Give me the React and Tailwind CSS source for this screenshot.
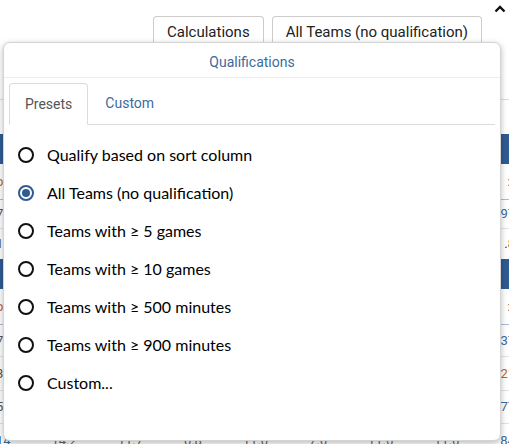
import React from "react";

const Radio = ({ checked }) =>
  checked ? (
    <span className="flex h-[16px] w-[16px] shrink-0 items-center justify-center rounded-full border-2 border-[#2f5b93]">
      <span className="h-[8px] w-[8px] rounded-full bg-[#2f5b93]" />
    </span>
  ) : (
    <span className="h-[16px] w-[16px] shrink-0 rounded-full border-2 border-[#111]" />
  );

const options = [
  "Qualify based on sort column",
  "All Teams (no qualification)",
  "Teams with ≥ 5 games",
  "Teams with ≥ 10 games",
  "Teams with ≥ 500 minutes",
  "Teams with ≥ 900 minutes",
  "Custom...",
];

const DataRow = ({ h, border, left, right, leftColor = "text-[#555]", rightColor = "text-[#3d6b9e]" }) => (
  <div className={`flex items-center justify-between ${h} ${border}`}>
    <span className={`-ml-[4px] text-[13px] ${leftColor}`}>{left}</span>
    <span className={`-mr-[6px] text-[13px] ${rightColor}`}>{right}</span>
  </div>
);

export default function App() {
  return (
    <div className="relative h-[444px] w-[509px] overflow-hidden bg-white font-['Roboto',sans-serif]">
      {/* top chevron */}
      <div className="flex h-[16px] justify-end pr-[3px] pt-[5px]">
        <svg width="12" height="8" viewBox="0 0 12 8">
          <path d="M1.5 6.5 L6 2 L10.5 6.5" fill="none" stroke="#111" strokeWidth="2.4" />
        </svg>
      </div>
      {/* toolbar */}
      <div className="flex h-[84px] items-start justify-end gap-[8px] border-b border-[#ddd] pr-[27px]">
        <button className="h-[40px] rounded-t-[4px] border border-b-0 border-[#ccc] bg-white px-[13px] pb-[8px] text-[15px] text-[#222]">
          Calculations
        </button>
        <button className="h-[40px] rounded-t-[4px] border border-b-0 border-[#ccc] bg-white px-[13px] pb-[8px] text-[15px] text-[#222]">
          All Teams (no qualification)
        </button>
      </div>
      {/* background table */}
      <div className="flex flex-col">
        <div className="h-[34px]" />
        <div className="h-[30px] bg-[#2f5b93]" />
        <DataRow h="h-[36px]" border="border-b border-[#a9bcd6]" left="o" right=":r" leftColor="text-[#c0661a]" rightColor="text-[#333]" />
        <DataRow h="h-[29px]" border="border-b border-[#e2e2e2]" left="7" right="97" />
        <DataRow h="h-[30px]" border="" left="1" right=".8" rightColor="text-[#333]" />
        <div className="h-[30px] bg-[#2f5b93]" />
        <DataRow h="h-[36px]" border="border-b border-[#a9bcd6]" left="o" right=":r" leftColor="text-[#c0661a]" rightColor="text-[#333]" />
        <DataRow h="h-[32px]" border="border-b border-[#e2e2e2]" left="7" right="37" />
        <DataRow h="h-[34px]" border="border-b border-[#e2e2e2]" left="3" right="21" rightColor="text-[#c0661a]" />
        <DataRow h="h-[33px]" border="border-b border-[#e2e2e2]" left="5" right="77" />
        <div className="flex h-[34px] items-center justify-between text-[13px] text-[#666]">
          <span className="-ml-[4px] text-[#3d6b9e]">14</span>
          <span>14.2</span>
          <span>11.7</span>
          <span>0.8</span>
          <span>11.0</span>
          <span>7.6</span>
          <span>11.6</span>
          <span>11.6</span>
          <span className="-mr-[6px] text-[#3d6b9e]">84</span>
        </div>
      </div>

      {/* popover */}
      <div className="absolute left-[3px] top-[42px] flex h-[399px] w-[498px] flex-col rounded-[7px] border border-[#d4d4d4] bg-white shadow-[0_2px_6px_rgba(0,0,0,0.28)]">
        <div className="flex h-[35px] items-center justify-center border-b border-[#ececec] pt-[4px] text-[14px] text-[#3d6b9e]">
          Qualifications
        </div>
        <div className="px-[5px] pt-[5px]">
          <div className="flex border-b border-[#dcdcdc]">
            <div className="-mb-px flex h-[42px] items-center rounded-t-[4px] border border-b-white border-[#dcdcdc] bg-white px-[15px] text-[14px] text-[#555]">
              Presets
            </div>
            <div className="flex h-[41px] items-center px-[17px] text-[14px] text-[#3d6b9e]">
              Custom
            </div>
          </div>
        </div>
        <div className="flex flex-col pl-[14px] pt-[11px] font-['Lato',sans-serif]">
          {options.map((o, i) => (
            <div key={o} className="flex h-[38px] items-center gap-[13px] text-[16px] text-black">
              <Radio checked={i === 1} />
              <span>{o}</span>
            </div>
          ))}
        </div>
      </div>
    </div>
  );
}
